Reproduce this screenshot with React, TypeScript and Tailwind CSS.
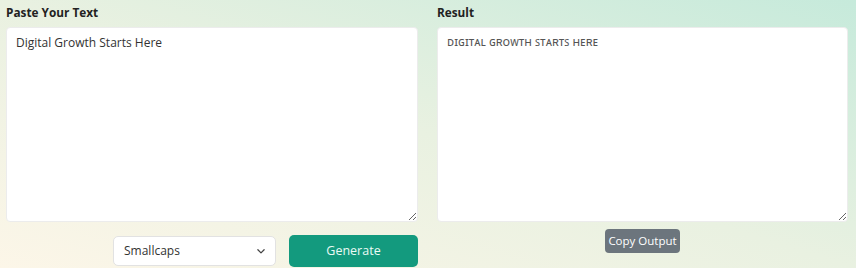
import React from "react";

const font = { fontFamily: '"Segoe UI", "Open Sans", "Noto Sans", sans-serif' };

export default function App() {
  return (
    <div className="w-[856px] h-[268px] bg-linear-to-tr from-[#fcf6e8] via-[#e9f1e1] to-[#c6eadb] pl-[6px] pr-[8px] text-[#222]" style={font}>
      <div className="grid grid-cols-[412px_411px] gap-x-[19px]">
        <div className="flex flex-col">
          <label className="text-[11.8px] font-bold text-[#222] h-[27px] leading-[24px]">Paste Your Text</label>
          <textarea
            className="w-full h-[195px] bg-white rounded-[4px] border border-[#ececec] px-[9px] py-[6px] text-[12px] text-[#333] resize-y outline-none"
            defaultValue="Digital Growth Starts Here"
            style={font}
          />
          <div className="flex justify-end items-center gap-[13px] mt-[13px]">
            <div className="w-[163px] h-[30px] bg-white border border-[#e2e2e2] rounded-[5px] flex items-center justify-between pl-[10px] pr-[9px] text-[12px] text-[#333]">
              <span>Smallcaps</span>
              <svg width="10" height="10" viewBox="0 0 16 16" fill="none" stroke="#444" strokeWidth="2" strokeLinecap="round" strokeLinejoin="round">
                <path d="M3 6l5 5 5-5" />
              </svg>
            </div>
            <button className="w-[129px] h-[32px] bg-[#139a7e] rounded-[5px] text-[#eafaf5] text-[12.5px]">Generate</button>
          </div>
        </div>
        <div className="flex flex-col">
          <label className="text-[11.8px] font-bold text-[#222] h-[27px] leading-[24px]">Result</label>
          <textarea
            className="w-full h-[195px] bg-white rounded-[4px] border border-[#ececec] px-[9px] py-[5px] text-[12px] text-[#555] resize-y outline-none"
            readOnly
            defaultValue="ᴅɪɢɪᴛᴀʟ ɢʀᴏᴡᴛʜ ꜱᴛᴀʀᴛꜱ ʜᴇʀᴇ"
            style={font}
          />
          <div className="flex justify-center mt-[7px]">
            <button className="w-[75px] h-[24px] bg-[#6c757d] rounded-[4px] text-white text-[11.5px]">Copy Output</button>
          </div>
        </div>
      </div>
    </div>
  );
}
